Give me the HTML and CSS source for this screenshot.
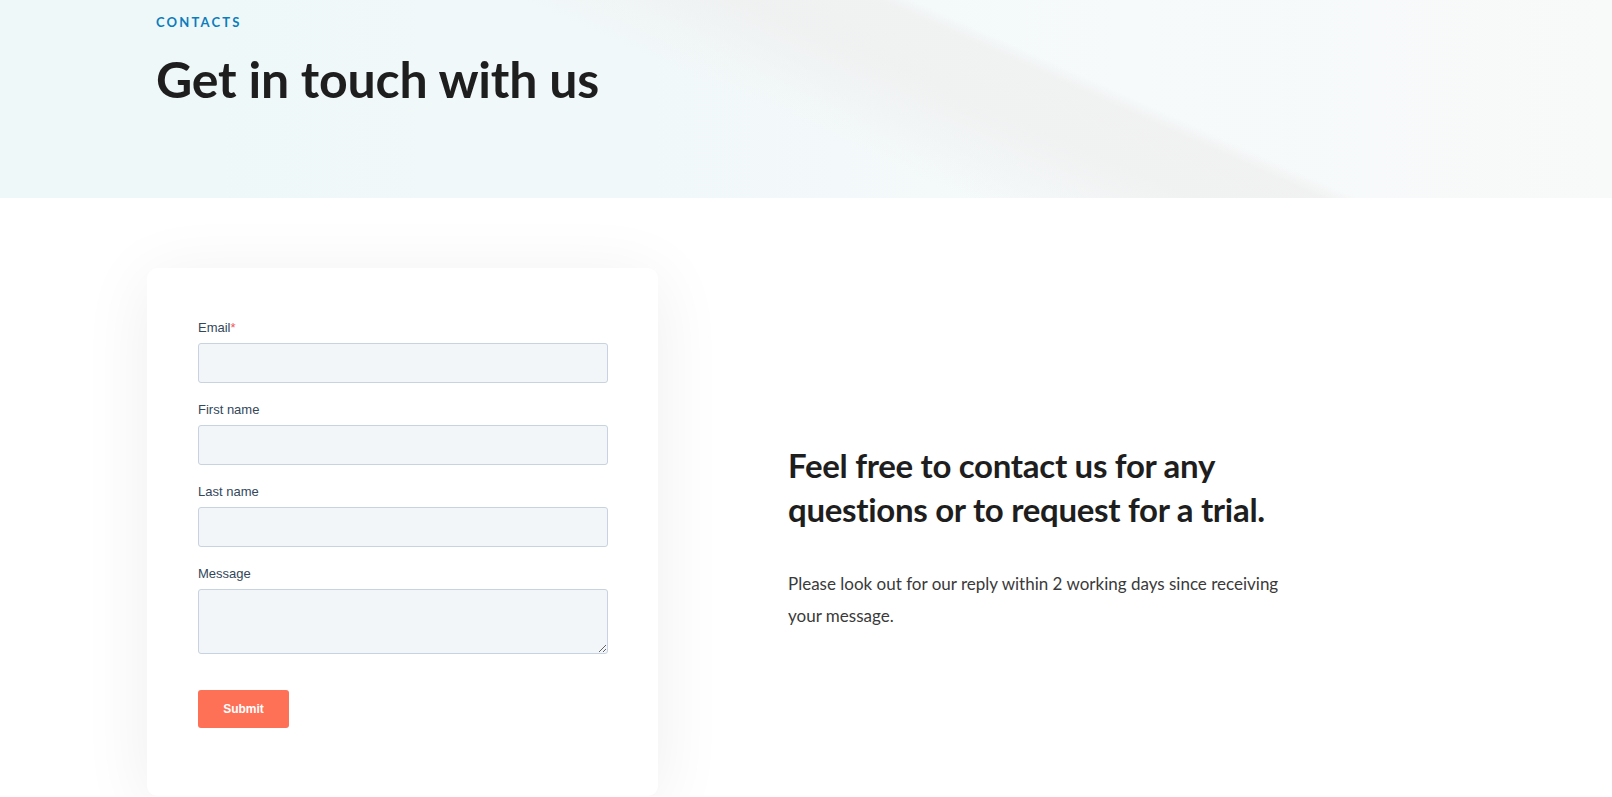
FILE: index.html
```html
<!DOCTYPE html>
<html lang="en">
<head>
<meta charset="utf-8">
<title>Contacts</title>
<link rel="stylesheet" href="styles.css">
</head>
<body>
<header class="hero">
  <div class="hero-inner">
    <p class="eyebrow">CONTACTS</p>
    <h1 class="hero-title">Get in touch with us</h1>
  </div>
</header>
<main class="contact">
  <div class="contact-inner">
    <div class="card">
      <form class="form">
        <div class="field">
          <label class="label">Email<span class="req">*</span></label>
          <input class="input" type="email">
        </div>
        <div class="field">
          <label class="label">First name</label>
          <input class="input" type="text">
        </div>
        <div class="field">
          <label class="label">Last name</label>
          <input class="input" type="text">
        </div>
        <div class="field">
          <label class="label">Message</label>
          <textarea class="input textarea"></textarea>
        </div>
        <button class="submit" type="button">Submit</button>
      </form>
    </div>
    <div class="info">
      <h2 class="info-title">Feel free to contact us for any questions or to request for a trial.</h2>
      <p class="info-text">Please look out for our reply within 2 working days since receiving your message.</p>
    </div>
  </div>
</main>
</body>
</html>
```
FILE: styles.css
```css
* { box-sizing: border-box; }
html, body { margin: 0; padding: 0; }
body {
  font-family: Lato, "Open Sans", sans-serif;
  background: #ffffff;
  color: #222222;
  overflow: hidden;
}
.hero {
  height: 198px;
  background:
    linear-gradient(24deg, rgba(239,239,239,0) 47%, rgba(239,239,239,0.8) 58%, rgba(240,240,240,0.85) 64.3%, rgba(247,250,251,0) 66%),
    linear-gradient(90deg, #eef8f8 0%, #f1f8f9 40%, #f6fafb 70%, #f8f9f9 100%);
}
.hero-inner {
  width: 1300px;
  margin: 0 auto;
  padding-top: 14px;
}
.eyebrow {
  margin: 0;
  font-family: Lato, sans-serif;
  font-weight: 700;
  font-size: 13px;
  line-height: 17px;
  letter-spacing: 2.2px;
  color: #0b7dbd;
}
.hero-title {
  margin: 18px 0 0;
  font-family: Lato, sans-serif;
  font-weight: 700;
  font-size: 50px;
  line-height: 60px;
  letter-spacing: -0.2px;
  color: #1e1e1e;
}
.contact {
  padding-top: 70px;
}
.contact-inner {
  width: 1318px;
  margin: 0 auto;
  display: flex;
  align-items: center;
}
.card {
  width: 511px;
  flex: none;
  background: #ffffff;
  border-radius: 10px;
  padding: 50px 50px 68px 51px;
  box-shadow: 0 10px 70px rgba(0, 0, 0, 0.07);
}
.form {
  display: flex;
  flex-direction: column;
}
.field {
  display: flex;
  flex-direction: column;
  margin-bottom: 17px;
}
.label {
  font-family: Helvetica, Arial, "Liberation Sans", sans-serif;
  font-size: 13px;
  line-height: 20px;
  color: #33475b;
  margin-bottom: 5px;
}
.req {
  color: #f2545b;
}
.input {
  width: 410px;
  height: 40px;
  background: #f3f6f9;
  border: 1px solid #c7d3e0;
  border-radius: 3px;
  font-family: Helvetica, Arial, "Liberation Sans", sans-serif;
  font-size: 14px;
  padding: 0 15px;
  margin: 0;
  outline: none;
}
.textarea {
  height: 65px;
  resize: vertical;
  padding: 8px 15px;
  display: block;
}
.submit {
  margin-top: 19px;
  width: 91px;
  height: 38px;
  border: none;
  border-radius: 3px;
  background: #ff7157;
  color: #ffffff;
  font-family: Helvetica, Arial, "Liberation Sans", sans-serif;
  font-weight: 700;
  font-size: 12px;
  padding: 0;
  cursor: pointer;
}
.info {
  width: 505px;
  margin-left: 130px;
  padding-top: 11px;
}
.info-title {
  margin: 0;
  font-family: Lato, sans-serif;
  font-weight: 700;
  font-size: 33px;
  line-height: 44px;
  letter-spacing: -0.3px;
  color: #1e1e1e;
}
.info-text {
  margin: 37px 0 0;
  font-family: Lato, sans-serif;
  font-size: 17px;
  line-height: 32px;
  color: #3a3a3a;
}
```
